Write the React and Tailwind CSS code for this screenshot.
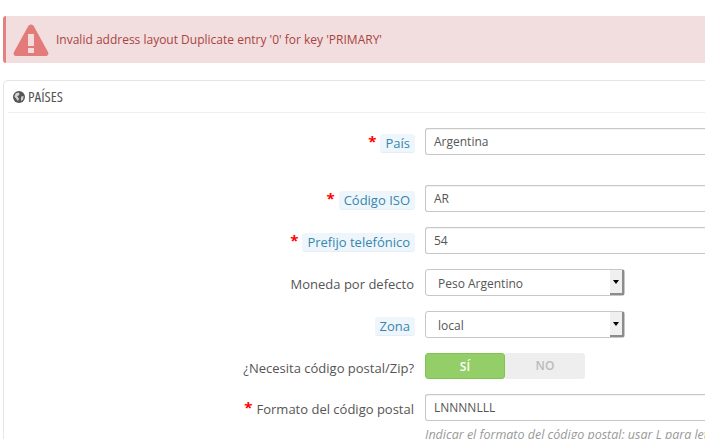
import React from 'react'

const font = { fontFamily: '"Open Sans", sans-serif' }

function Label({ text, required, hint }) {
  return (
    <div className="w-[407px] shrink-0 flex justify-end items-center gap-[4px] text-[13px] text-[#555] pt-[3px]">
      {required && <span className="text-[#f00] text-[15px] font-bold leading-none h-[14px] mt-[-4px]">*</span>}
      {hint ? (
        <span className="bg-[#eff6fb] rounded-[3px] border-b border-[#e3eef6] px-[5px] h-[19px] leading-[19px] text-[#3586ae]">{text}</span>
      ) : (
        <span className="leading-[19px] pr-[1px]">{text}</span>
      )}
    </div>
  )
}

function Input({ value }) {
  return (
    <div className="flex-1 h-[27px] border border-[#c7c7c7] border-r-0 rounded-l-[3px] bg-white pl-[8px] text-[12px] leading-[25px] text-[#555] shadow-[inset_0_1px_1px_rgba(0,0,0,0.05)]">
      {value}
    </div>
  )
}

function Select({ value }) {
  return (
    <div className="w-[200px] h-[27px] flex border border-[#c7c7c7] rounded-[3px] bg-white text-[12px] leading-[27px] text-[#555]">
      <span className="flex-1 pl-[12px]">{value}</span>
      <span className="w-[14px] bg-[#f0f0f0] border-r-2 border-b-2 border-[#8c8c8c] flex items-center justify-center">
        <span className="w-0 h-0 border-x-[3.5px] border-x-transparent border-t-[4px] border-t-black" />
      </span>
    </div>
  )
}

export default function App() {
  return (
    <div style={font} className="w-[705px] h-[439px] overflow-hidden bg-white pt-4 pl-[3px]">
      <div className="h-[47px] bg-[#f2dede] border-l-[3px] border-[#e58080] rounded-l-[3px] flex items-center pl-[7px] text-[12px] text-[#a94442]">
        <svg width="36" height="34" viewBox="0 0 36 34" className="shrink-0">
          <path d="M18 1.5 C19.5 1.5 20.5 2.5 21 3.5 L35 29 C36 31 35 33 32.5 33 L3.5 33 C1 33 0 31 1 29 L15 3.5 C15.5 2.5 16.5 1.5 18 1.5 Z" fill="#e47b7b" />
          <rect x="15" y="11" width="6" height="12" fill="#f5dcdc" />
          <rect x="15" y="25" width="6" height="5" fill="#f5dcdc" />
        </svg>
        <span className="ml-[7px]">Invalid address layout Duplicate entry '0' for key 'PRIMARY'</span>
      </div>

      <div className="mt-[17px] h-[400px] border border-[#e6e6e6] border-r-0 rounded-l-[5px] pl-[4px]">
        <div className="h-[32px] border-b border-[#eeeeee] flex items-center gap-[3px] pl-[5px] text-[15px] text-[#555]">
          <svg width="12" height="12" viewBox="0 0 13 13" className="shrink-0">
            <circle cx="6.5" cy="6.5" r="6.5" fill="#555" />
            <path d="M3 2.5 L6.5 1.5 L7 4 L4.5 6 L6.5 8 L5.5 11 L3.5 8.5 L1.5 6 Z M9 6 L11.5 5.5 L11 9 L9 11 L8.5 8 Z" fill="#fff" opacity="0.75" />
          </svg>
          <span className="[font-stretch:75%] font-medium">PAÍSES</span>
        </div>

        <div className="flex mt-[15px] h-[27px] gap-[10px]">
          <Label text="País" required hint />
          <Input value="Argentina" />
        </div>
        <div className="flex mt-[30px] h-[27px] gap-[10px]">
          <Label text="Código ISO" required hint />
          <Input value="AR" />
        </div>
        <div className="flex mt-[15px] h-[27px] gap-[10px]">
          <Label text="Prefijo telefónico" required hint />
          <Input value="54" />
        </div>
        <div className="flex mt-[15px] h-[27px] gap-[10px]">
          <Label text="Moneda por defecto" />
          <Select value="Peso Argentino" />
        </div>
        <div className="flex mt-[15px] h-[27px] gap-[10px]">
          <Label text="Zona" hint />
          <Select value="local" />
        </div>
        <div className="flex mt-[15px] h-[27px] gap-[10px]">
          <Label text="¿Necesita código postal/Zip?" />
          <div className="w-[160px] h-[26px] flex rounded-[3px] overflow-hidden text-[12px] font-semibold text-center leading-[25px]">
            <span className="w-[80px] bg-[#93ce68] border border-[#80c44f] rounded-[3px] text-white">SÍ</span>
            <span className="w-[80px] bg-[#eeeeee] text-[#bbbbbb]">NO</span>
          </div>
        </div>
        <div className="flex mt-[14px] h-[27px] gap-[10px]">
          <Label text="Formato del código postal" required />
          <Input value="LNNNNLLL" />
        </div>
        <div className="mt-[5px] pl-[417px] text-[12.5px] italic text-[#999] whitespace-nowrap">
          Indicar el formato del código postal: usar L para letra
        </div>
      </div>
    </div>
  )
}
